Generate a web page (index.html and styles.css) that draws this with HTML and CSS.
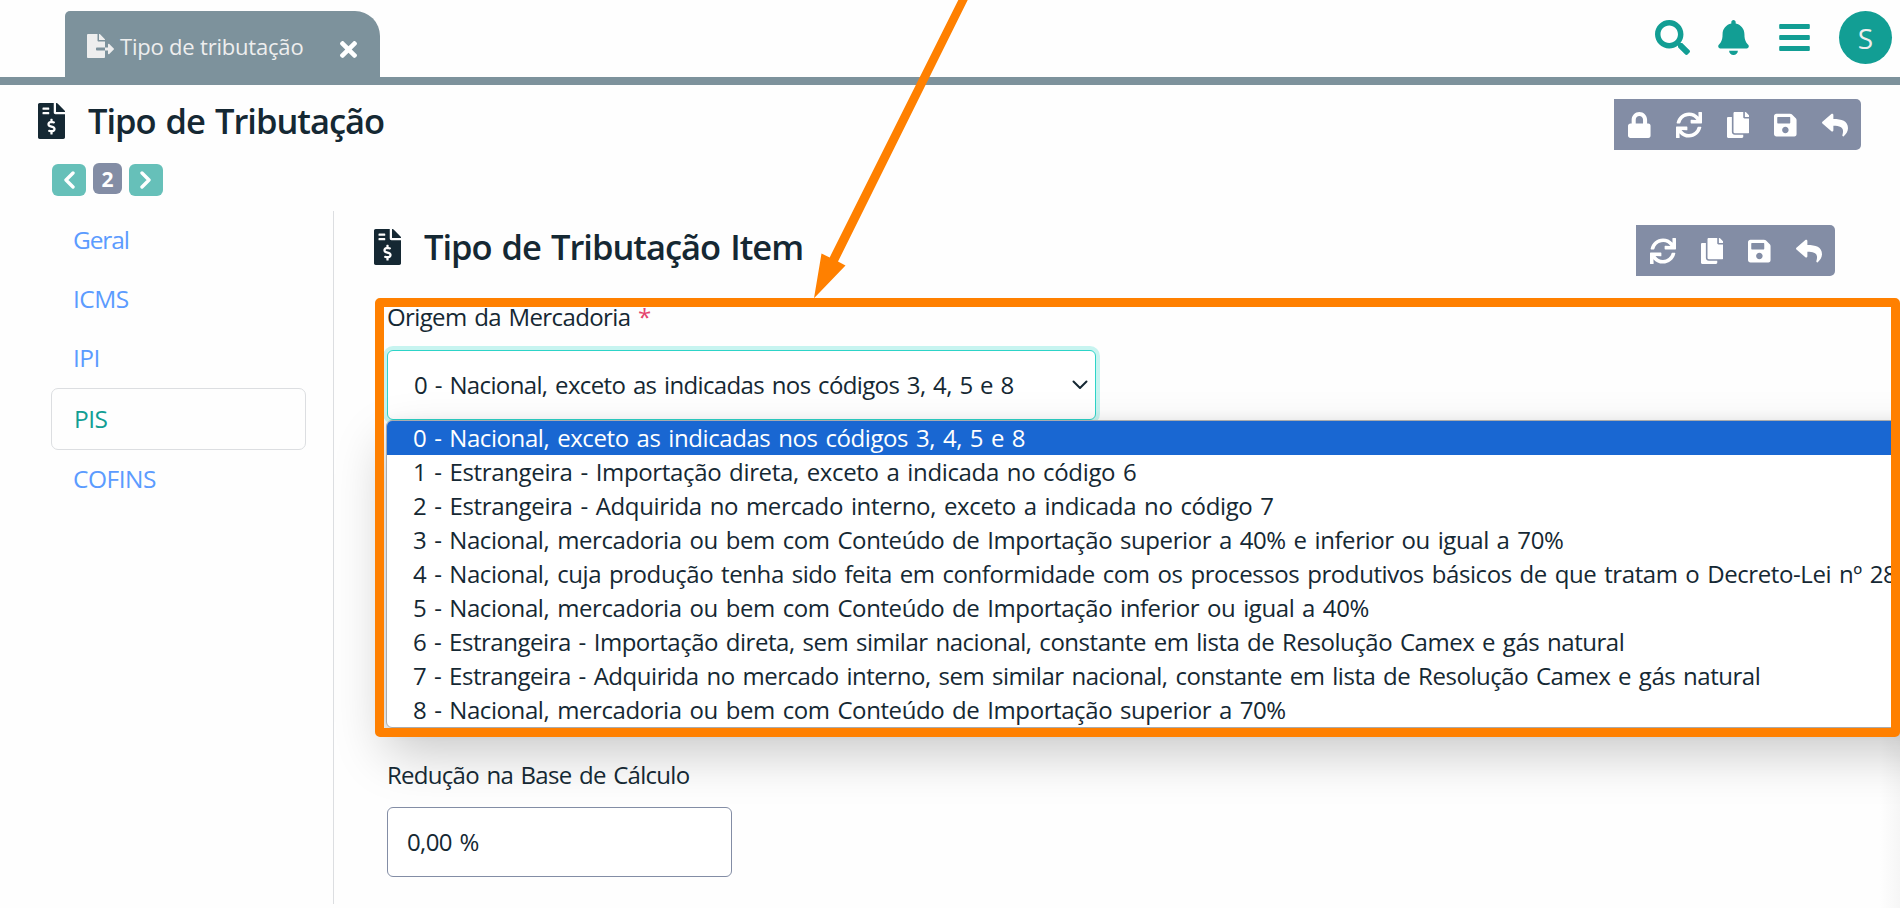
FILE: index.html
```html
<!DOCTYPE html>
<html lang="pt-BR">
<head>
<meta charset="utf-8">
<title>Tipo de Tributação</title>
<link rel="stylesheet" href="styles.css">
</head>
<body>
<svg class="sprite" width="0" height="0" aria-hidden="true">
  <symbol id="i-export" viewBox="0 0 576 512"><path d="M384 121.900c0-6.300-2.500-12.400-7-16.900L279.100 7c-4.500-4.500-10.600-7-17-7H256v128h128zM571 308l-95.700-96.400c-10.100-10.100-27.400-3-27.400 11.300V288h-64v64h64v65.200c0 14.300 17.300 21.400 27.400 11.300L571 332c6.600-6.600 6.600-17.400 0-24zm-379 28v-32c0-8.800 7.200-16 16-16h176V160H248c-13.200 0-24-10.800-24-24V0H24C10.700 0 0 10.700 0 24v464c0 13.300 10.700 24 24 24h336c13.300 0 24-10.700 24-24V352H208c-8.800 0-16-7.200-16-16z"/></symbol>
  <symbol id="i-times" viewBox="0 0 352 512"><path d="M242.720 256l100.070-100.070c12.280-12.280 12.280-32.190 0-44.480l-22.240-22.240c-12.280-12.280-32.190-12.280-44.480 0L176 189.280 75.930 89.210c-12.280-12.280-32.190-12.280-44.480 0L9.210 111.450c-12.280 12.280-12.280 32.190 0 44.480L109.280 256 9.210 356.070c-12.280 12.280-12.280 32.190 0 44.480l22.240 22.240c12.280 12.280 32.200 12.280 44.480 0L176 322.720l100.070 100.070c12.280 12.280 32.200 12.280 44.480 0l22.240-22.240c12.280-12.280 12.280-32.190 0-44.480L242.720 256z"/></symbol>
  <symbol id="i-search" viewBox="0 0 512 512"><path d="M505 442.700L405.300 343c-4.500-4.500-10.600-7-17-7H372c27.600-35.300 44-79.700 44-128C416 93.100 322.900 0 208 0S0 93.100 0 208s93.100 208 208 208c48.300 0 92.700-16.400 128-44v16.300c0 6.400 2.500 12.500 7 17l99.700 99.700c9.400 9.400 24.600 9.400 33.900 0l28.300-28.300c9.400-9.400 9.400-24.600.1-34zM208 336c-70.700 0-128-57.200-128-128 0-70.700 57.200-128 128-128 70.700 0 128 57.200 128 128 0 70.700-57.200 128-128 128z"/></symbol>
  <symbol id="i-bell" viewBox="0 0 448 512"><path d="M224 512c35.320 0 63.970-28.650 63.970-64H160.030c0 35.350 28.650 64 63.970 64zm215.390-149.710c-19.320-20.760-55.470-51.990-55.470-154.290 0-77.700-54.480-139.900-127.940-155.160V32c0-17.670-14.320-32-31.980-32s-31.980 14.330-31.980 32v20.840C118.560 68.100 64.080 130.300 64.080 208c0 102.300-36.150 133.530-55.470 154.290-6 6.450-8.660 14.160-8.610 21.710.11 16.400 12.980 32 32.100 32h383.800c19.120 0 32-15.600 32.100-32 .05-7.550-2.610-15.270-8.610-21.710z"/></symbol>
  <symbol id="i-bars" viewBox="0 0 448 512"><rect y="60" width="448" height="72" rx="14"/><rect y="220" width="448" height="72" rx="14"/><rect y="380" width="448" height="72" rx="14"/></symbol>
  <symbol id="i-invoice" viewBox="0 0 384 512"><path d="M377 105L279.100 7c-4.500-4.500-10.600-7-17-7H256v128h128v-6.100c0-6.300-2.500-12.400-7-16.900zm-153 31V0H24C10.700 0 0 10.700 0 24v464c0 13.300 10.700 24 24 24h336c13.300 0 24-10.700 24-24V160H248c-13.200 0-24-10.800-24-24zM64 72c0-4.420 3.580-8 8-8h80c4.420 0 8 3.580 8 8v16c0 4.420-3.580 8-8 8H72c-4.420 0-8-3.580-8-8V72zm0 80v-16c0-4.420 3.580-8 8-8h80c4.420 0 8 3.580 8 8v16c0 4.420-3.580 8-8 8H72c-4.420 0-8-3.580-8-8zm144 263.880V440c0 4.420-3.580 8-8 8h-16c-4.420 0-8-3.580-8-8v-24.290c-11.290-.58-22.270-4.520-31.370-11.350-3.900-2.930-4.100-8.770-.57-12.140l11.750-11.210c2.770-2.640 6.890-2.760 10.130-.73 3.870 2.420 8.260 3.720 12.820 3.720h28.110c6.500 0 11.800-5.920 11.800-13.190 0-5.950-3.610-11.190-8.770-12.730l-45-13.500c-18.590-5.580-31.580-23.420-31.580-43.390 0-24.520 19.050-44.440 42.670-45.070V232c0-4.420 3.580-8 8-8h16c4.420 0 8 3.580 8 8v24.290c11.290.58 22.270 4.510 31.370 11.350 3.900 2.930 4.100 8.770.57 12.140l-11.750 11.210c-2.770 2.640-6.890 2.760-10.130.73-3.870-2.430-8.260-3.720-12.820-3.720h-28.110c-6.500 0-11.800 5.920-11.800 13.190 0 5.950 3.610 11.190 8.770 12.730l45 13.500c18.590 5.580 31.580 23.420 31.580 43.390 0 24.530-19.050 44.440-42.670 45.070z"/></symbol>
  <symbol id="i-lock" viewBox="0 0 448 512"><path d="M400 224h-24v-72C376 68.200 307.800 0 224 0S72 68.200 72 152v72H48c-26.500 0-48 21.500-48 48v192c0 26.500 21.500 48 48 48h352c26.500 0 48-21.500 48-48V272c0-26.500-21.500-48-48-48zm-104 0H152v-72c0-39.700 32.300-72 72-72s72 32.300 72 72v72z"/></symbol>
  <symbol id="i-sync" viewBox="0 0 512 512"><path d="M440.650 12.570l4 82.770A247.160 247.160 0 0 0 255.830 8C134.730 8 33.910 94.920 12.290 209.820A12 12 0 0 0 24.090 224h49.050a12 12 0 0 0 11.670-9.260 175.910 175.910 0 0 1 317-56.940l-101.460-4.860a12 12 0 0 0-12.570 12v47.410a12 12 0 0 0 12 12H500a12 12 0 0 0 12-12V12a12 12 0 0 0-12-12h-47.370a12 12 0 0 0-11.980 12.570zM255.830 432a175.610 175.610 0 0 1-146-77.800l101.800 4.870a12 12 0 0 0 12.570-12v-47.400a12 12 0 0 0-12-12H12a12 12 0 0 0-12 12V500a12 12 0 0 0 12 12h47.350a12 12 0 0 0 12-12.600l-4.150-82.570A247.170 247.170 0 0 0 255.830 504c121.110 0 221.930-86.920 243.550-201.820a12 12 0 0 0-11.800-14.180h-49.050a12 12 0 0 0-11.670 9.260A175.860 175.860 0 0 1 255.830 432z"/></symbol>
  <symbol id="i-copy" viewBox="0 0 448 512"><path d="M320 448v40c0 13.255-10.745 24-24 24H24c-13.255 0-24-10.745-24-24V120c0-13.255 10.745-24 24-24h72v296c0 30.879 25.121 56 56 56h168zm0-344V0H152c-13.255 0-24 10.745-24 24v368c0 13.255 10.745 24 24 24h272c13.255 0 24-10.745 24-24V128H344c-13.200 0-24-10.800-24-24zm120.971-31.029L375.029 7.029A24 24 0 0 0 358.059 0H352v96h96v-6.059a24 24 0 0 0-7.029-16.970z"/></symbol>
  <symbol id="i-save" viewBox="0 0 448 512"><path d="M433.941 129.941l-83.882-83.882A48 48 0 0 0 316.118 32H48C21.490 32 0 53.490 0 80v352c0 26.510 21.490 48 48 48h352c26.510 0 48-21.490 48-48V163.882a48 48 0 0 0-14.059-33.941zM224 416c-35.346 0-64-28.654-64-64 0-35.346 28.654-64 64-64s64 28.654 64 64c0 35.346-28.654 64-64 64zm96-304.520V212c0 6.627-5.373 12-12 12H76c-6.627 0-12-5.373-12-12V108c0-6.627 5.373-12 12-12h228.520c3.183 0 6.235 1.264 8.485 3.515l3.480 3.480A11.996 11.996 0 0 1 320 111.480z"/></symbol>
  <symbol id="i-reply" viewBox="0 0 512 512"><path d="M8.309 189.836L184.313 37.851C199.719 24.546 224 35.347 224 56.015v80.053c160.629 1.839 288 34.032 288 186.258 0 61.441-39.581 122.309-83.333 154.132-13.653 9.931-33.111-2.533-28.077-18.631 45.344-145.012-21.507-183.510-176.590-185.742V360c0 20.700-24.300 31.453-39.687 18.164l-176.004-152c-11.071-9.562-11.086-26.753 0-36.328z"/></symbol>
</svg>

<header class="topbar">
  <div class="tab">
    <svg class="tab-icon"><use href="#i-export"/></svg>
    <span class="tab-label">Tipo de tributação</span>
    <svg class="tab-close"><use href="#i-times"/></svg>
  </div>
  <nav class="top-actions">
    <svg class="top-icon wide"><use href="#i-search"/></svg>
    <svg class="top-icon"><use href="#i-bell"/></svg>
    <svg class="top-icon menu"><use href="#i-bars"/></svg>
    <span class="avatar">S</span>
  </nav>
</header>

<section class="page-head">
  <svg class="doc-icon"><use href="#i-invoice"/></svg>
  <h1 class="title">Tipo de Tributação</h1>
  <div class="toolbar">
    <svg class="tool"><use href="#i-lock"/></svg>
    <svg class="tool wide"><use href="#i-sync"/></svg>
    <svg class="tool"><use href="#i-copy"/></svg>
    <svg class="tool"><use href="#i-save"/></svg>
    <svg class="tool wide"><use href="#i-reply"/></svg>
  </div>
</section>

<div class="pager">
  <span class="pager-btn"><svg class="chev" viewBox="0 0 12 18"><path d="M10 2 3 9l7 7"/></svg></span>
  <span class="pager-num">2</span>
  <span class="pager-btn"><svg class="chev" viewBox="0 0 12 18"><path d="m2 2 7 7-7 7"/></svg></span>
</div>

<div class="body">
  <nav class="side">
    <a class="side-link">Geral</a>
    <a class="side-link">ICMS</a>
    <a class="side-link">IPI</a>
    <a class="side-link active">PIS</a>
    <a class="side-link">COFINS</a>
  </nav>
  <main class="main">
    <div class="item-head">
      <svg class="doc-icon"><use href="#i-invoice"/></svg>
      <h2 class="title item-title">Tipo de Tributação Item</h2>
      <div class="toolbar">
        <svg class="tool wide"><use href="#i-sync"/></svg>
        <svg class="tool"><use href="#i-copy"/></svg>
        <svg class="tool"><use href="#i-save"/></svg>
        <svg class="tool wide"><use href="#i-reply"/></svg>
      </div>
    </div>
    <div class="form">
      <label class="label origin-label">Origem da Mercadoria <span class="req">*</span></label>
      <div class="select">
        <span class="select-text">0 - Nacional, exceto as indicadas nos códigos 3, 4, 5 e 8</span>
        <svg class="select-arrow" viewBox="0 0 16 10"><path d="m1.500 1.500 6.500 6.500 6.500-6.500"/></svg>
        <ul class="options">
          <li class="option current">0 - Nacional, exceto as indicadas nos códigos 3, 4, 5 e 8</li>
          <li class="option">1 - Estrangeira - Importação direta, exceto a indicada no código 6</li>
          <li class="option">2 - Estrangeira - Adquirida no mercado interno, exceto a indicada no código 7</li>
          <li class="option snug">3 - Nacional, mercadoria ou bem com Conteúdo de Importação superior a 40% e inferior ou igual a 70%</li>
          <li class="option snug">4 - Nacional, cuja produção tenha sido feita em conformidade com os processos produtivos básicos de que tratam o Decreto-Lei nº 28</li>
          <li class="option snug">5 - Nacional, mercadoria ou bem com Conteúdo de Importação inferior ou igual a 40%</li>
          <li class="option tight">6 - Estrangeira - Importação direta, sem similar nacional, constante em lista de Resolução Camex e gás natural</li>
          <li class="option tight">7 - Estrangeira - Adquirida no mercado interno, sem similar nacional, constante em lista de Resolução Camex e gás natural</li>
          <li class="option snug">8 - Nacional, mercadoria ou bem com Conteúdo de Importação superior a 70%</li>
        </ul>
      </div>
      <label class="label reduction-label">Redução na Base de Cálculo</label>
      <div class="input">0,00 %</div>
    </div>
  </main>
</div>

<div class="highlight"></div>
<svg class="arrow" viewBox="0 0 200 300"><path d="M158.300 0h9.400L38 261.600l7.500 3.900L14 298.300l7.500-44.800 8.200 3.900z"/></svg>
</body>
</html>
```
FILE: styles.css
```css
* { box-sizing: border-box; }
body {
  position: relative;
  margin: 0;
  width: 1900px;
  height: 908px;
  overflow: hidden;
  background: #fefefe linear-gradient(to left, #f6f6f6, #fefefe) right bottom / 20px 180px no-repeat;
  color: #152833;
  font-family: "Open Sans", "Noto Sans", sans-serif;
  font-size: 24px;
}
svg { display: block; flex: none; fill: currentColor; }
.sprite { position: absolute; }

.topbar {
  display: flex;
  justify-content: space-between;
  height: 85px;
  padding: 11px 8px 0 65px;
  border-bottom: 8px solid #7d929c;
}
.tab {
  display: flex;
  align-items: center;
  width: 315px;
  height: 66px;
  padding: 0 23px 6px 22px;
  border-radius: 5px 25px 0 0;
  background: #7d929c;
  color: #eee;
}
.tab-icon { width: 27px; height: 24px; margin-top: 10px; }
.tab-label { flex: 1; margin: 10px 0 0 6px; font-size: 22px; line-height: 30px; letter-spacing: -.2px; white-space: nowrap; }
.tab-close { width: 17px; height: 25px; margin-top: 17px; color: #fff; }
.top-actions { display: flex; gap: 29px; align-items: flex-start; color: #129e94; }
.top-icon { width: 31px; height: 35px; margin-top: 9px; }
.top-icon.wide { width: 35px; margin-right: -1px; }
.top-icon.menu { margin-left: 1px; }
.avatar {
  width: 53px;
  height: 53px;
  border-radius: 50%;
  background: #129e94;
  color: #eee;
  font-size: 28px;
  line-height: 54px;
  text-align: center;
}

.page-head { display: flex; height: 78px; padding: 14px 39px 0 38px; }
.doc-icon { width: 27px; height: 36px; margin-top: 4px; }
.title { flex: 1; margin: 0 0 0 23px; font-size: 34.5px; line-height: 44px; font-weight: 600; letter-spacing: -1px; word-spacing: 2px; white-space: nowrap; }
.toolbar {
  display: flex;
  align-items: center;
  gap: 25px;
  height: 51px;
  padding: 0 13px 0 14px;
  border-radius: 0 5px 5px 0;
  background: #838da5;
  color: #fff;
}
.tool { width: 22.75px; height: 26px; }
.tool.wide { width: 26px; }

.pager { display: flex; gap: 7px; height: 48px; padding-left: 52px; }
.pager-btn { display: flex; align-items: center; justify-content: center; width: 34px; height: 32px; margin-top: 1px; border-radius: 6px; background: #66c0b9; }
.chev { width: 12px; height: 18px; fill: none; stroke: #fff; stroke-width: 3.400; stroke-linecap: round; stroke-linejoin: round; }
.pager-num { width: 29px; height: 31px; border-radius: 6px; background: #838da5; color: #fff; font-size: 21px; line-height: 32px; font-weight: 700; text-align: center; }

.body { display: flex; }
.side { display: flex; flex-direction: column; width: 334px; height: 693px; padding: 0 27px 0 51px; border-right: 1px solid #dcdee1; }
.side-link { height: 59px; padding-left: 22px; font-size: 24.5px; line-height: 58px; color: #5b9bff; letter-spacing: -.5px; }
.side-link:first-child { letter-spacing: -1.1px; }
.side-link.active { height: 62px; line-height: 60px; border: 1px solid #dcdee1; border-radius: 7px; color: #129e94; }

.main { flex: 1; min-width: 0; }
.item-head { display: flex; height: 87px; padding: 14px 65px 0 40px; }
.form { display: flex; flex-direction: column; padding-left: 53px; word-spacing: 2px; }
.label { white-space: nowrap; line-height: 34px; letter-spacing: -.62px; }
.origin-label { margin-top: 2px; }
.req { color: #e5446d; }
.select {
  position: relative;
  display: flex;
  align-items: center;
  justify-content: space-between;
  width: 709px;
  height: 70px;
  margin-top: 16px;
  padding: 0 7px 0 26px;
  border: 1px solid #2dd4c8;
  border-radius: 6px;
  background: #fff;
  box-shadow: 0 0 0 4px #c7f4f0;
}
.select-text { white-space: nowrap; line-height: 34px; letter-spacing: -.63px; }
.select-arrow { width: 16px; height: 10px; fill: none; stroke: #152833; stroke-width: 2; stroke-linecap: round; stroke-linejoin: round; }
.options {
  position: absolute;
  left: -2px;
  top: 69px;
  width: 1580px;
  height: 308px;
  margin: 0;
  padding: 0;
  overflow: hidden;
  list-style: none;
  border: 1px solid #a9abad;
  border-radius: 6px;
  background: #fff;
  box-shadow: 0 24px 52px rgba(0, 0, 0, .22), 0 2px 14px rgba(0, 0, 0, .08);
}
.option { height: 34px; padding-left: 26px; line-height: 34px; letter-spacing: -.35px; white-space: nowrap; }
.option.snug { letter-spacing: -.41px; }
.option.tight { letter-spacing: -.465px; }
.option.current { background: #1967d2; color: #fff; letter-spacing: -.41px; }
.reduction-label { position: relative; margin-top: 338px; letter-spacing: -.72px; }
.input { width: 345px; height: 70px; margin-top: 15px; padding-left: 19px; border: 1px solid #838da5; border-radius: 6px; background: #fff; line-height: 68px; letter-spacing: -.6px; }

/* annotation drawn over the form */
.highlight { position: absolute; left: 375px; top: 298px; width: 1525px; height: 439px; border: 9px solid #ff8000; border-radius: 5px; }
.arrow { position: absolute; left: 800px; top: 0; width: 200px; height: 300px; fill: #ff8000; }
```
